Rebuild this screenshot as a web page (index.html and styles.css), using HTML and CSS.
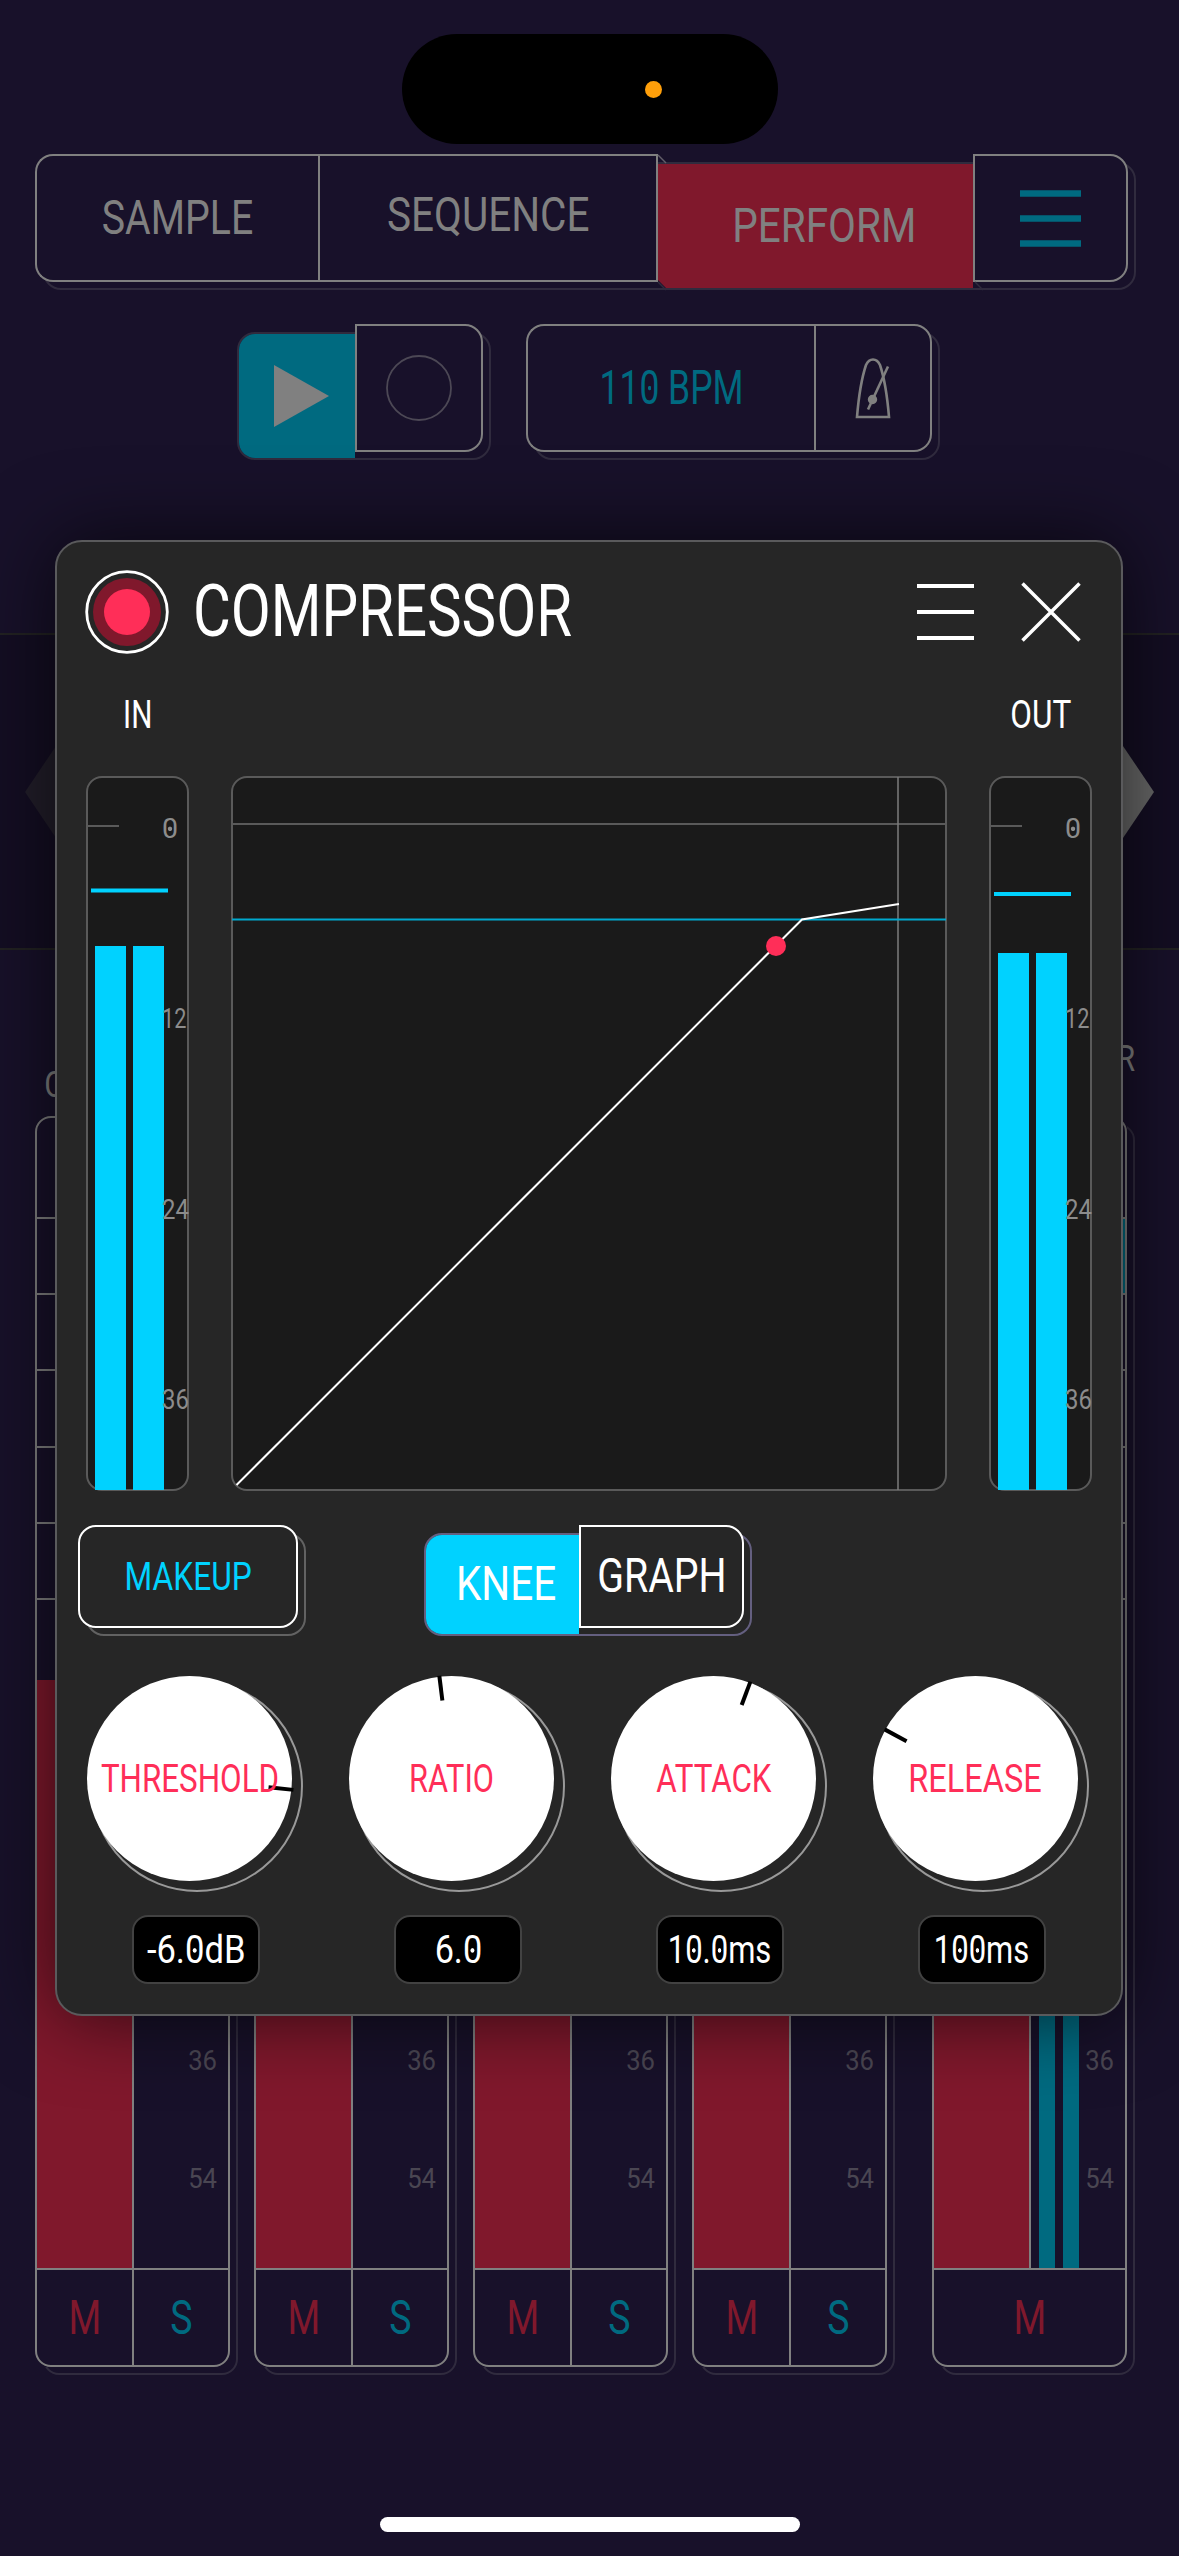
FILE: index.html
```html
<!DOCTYPE html>
<html lang="en">
<head>
<meta charset="utf-8">
<title>Compressor</title>
<link rel="stylesheet" href="styles.css">
</head>
<body>
<div class="screen">
  <main class="app">
    <nav class="group tabs">
      <div class="cell cell-first"><span class="label x81">SAMPLE</span></div>
      <div class="cell cell-mid"><span class="label x84 lift">SEQUENCE</span></div>
      <div class="cell-pressed pressed-red"><span class="label x84">PERFORM</span></div>
      <div class="cell cell-last">
        <svg class="menu-icon" viewBox="0 0 61 57"><path d="M0 3.500h61M0 28.500h61M0 53.500h61" stroke="#006a80" stroke-width="6.500"/></svg>
      </div>
      <svg class="bevel" viewBox="0 0 330 138"><path d="M1 1l8 8" stroke="#625e69" stroke-width="1.500"/><path d="M1 128l8 8M318 128l8 8" stroke="#302b3e" stroke-width="1.500"/></svg>
    </nav>

    <div class="transport">
      <div class="group player">
        <div class="cell-pressed pressed-teal"><svg class="play-icon" viewBox="0 0 55 62"><path d="M0 0L55 31L0 62z" fill="#808080"/></svg></div>
        <div class="cell cell-last"><svg class="rec-icon" viewBox="0 0 66 66"><circle cx="33" cy="33" r="32" fill="none" stroke="#4c4855" stroke-width="1.800"/></svg></div>
      </div>
      <div class="group tempo">
        <div class="cell cell-first"><span class="label bpm">11<span class="zero">0</span> BPM</span></div>
        <div class="cell cell-last">
          <svg class="metronome-icon" viewBox="0 0 36 62" fill="none" stroke="#808080" stroke-width="2.600"><path d="M2 60C3.500 42 6 23 11 8Q13.500 2.500 18 2.500Q22.500 2.500 25 8C30 23 32.500 42 34 60z"/><path d="M33 9.500L13 52.500"/><circle cx="17.500" cy="42.500" r="3.400" fill="#808080"/></svg>
        </div>
      </div>
    </div>

    <section class="band">
      <svg class="arrow" viewBox="0 0 60 178"><path d="M0 89L60 0V178z" fill="#221e2a"/></svg>
      <svg class="arrow" viewBox="0 0 60 178"><path d="M60 89L0 0V178z" fill="#686868"/></svg>
    </section>

    <section class="mixer">
      <div class="channel">
        <div class="name">C</div>
        <div class="strip">
          <div class="slot slot-head"></div><div class="slot"></div><div class="slot"></div><div class="slot"></div><div class="slot"></div><div class="slot"></div>
          <div class="fader"><div class="track"></div><div class="scale"><span>36</span><span>54</span></div></div>
          <div class="toggles"><b class="mute"><span>M</span></b><b class="solo"><span>S</span></b></div>
        </div>
      </div>
      <div class="channel">
        <div class="name"></div>
        <div class="strip">
          <div class="slot slot-head"></div><div class="slot"></div><div class="slot"></div><div class="slot"></div><div class="slot"></div><div class="slot"></div>
          <div class="fader"><div class="track"></div><div class="scale"><span>36</span><span>54</span></div></div>
          <div class="toggles"><b class="mute"><span>M</span></b><b class="solo"><span>S</span></b></div>
        </div>
      </div>
      <div class="channel">
        <div class="name"></div>
        <div class="strip">
          <div class="slot slot-head"></div><div class="slot"></div><div class="slot"></div><div class="slot"></div><div class="slot"></div><div class="slot"></div>
          <div class="fader"><div class="track"></div><div class="scale"><span>36</span><span>54</span></div></div>
          <div class="toggles"><b class="mute"><span>M</span></b><b class="solo"><span>S</span></b></div>
        </div>
      </div>
      <div class="channel">
        <div class="name"></div>
        <div class="strip">
          <div class="slot slot-head"></div><div class="slot"></div><div class="slot"></div><div class="slot"></div><div class="slot"></div><div class="slot"></div>
          <div class="fader"><div class="track"></div><div class="scale"><span>36</span><span>54</span></div></div>
          <div class="toggles"><b class="mute"><span>M</span></b><b class="solo"><span>S</span></b></div>
        </div>
      </div>
      <div class="channel master">
        <div class="name">R</div>
        <div class="strip">
          <div class="slot slot-head"></div><div class="slot slot-on"></div><div class="slot"></div><div class="slot"></div><div class="slot"></div><div class="slot"></div>
          <div class="fader"><div class="track"></div><div class="levels"><i></i><i></i></div><div class="scale"><span>36</span><span>54</span></div></div>
          <div class="toggles"><b class="mute"><span>M</span></b></div>
        </div>
      </div>
    </section>
  </main>

  <div class="island"><div class="island-dot"></div></div>
  <div class="home-bar"></div>

  <section class="modal">
    <header class="modal-head">
      <svg class="power" viewBox="0 0 84 84"><circle cx="42" cy="42" r="40.300" fill="none" stroke="#fff" stroke-width="2.800"/><circle cx="42" cy="42" r="34" fill="#80182c"/><circle cx="42" cy="42" r="23" fill="#ff2e58"/></svg>
      <h1 class="title">COMPRESSOR</h1>
      <svg class="options" viewBox="0 0 57 58"><path d="M0 3h57M0 29h57M0 55h57" stroke="#fff" stroke-width="4"/></svg>
      <svg class="close" viewBox="0 0 60 60"><path d="M1.500 1.500L58.500 58.500M58.500 1.500L1.500 58.500" stroke="#fff" stroke-width="3.500"/></svg>
    </header>

    <div class="columns captions"><span class="caption in">IN</span><span></span><span class="caption">OUT</span></div>

    <div class="columns displays">
      <div class="meter">
        <svg viewBox="0 0 103 715"><path d="M1 49h31" stroke="#5a5a5a" stroke-width="2"/><path d="M4 113.500h77" stroke="#00d2ff" stroke-width="4"/><path d="M8 169h31v544H8zM46 169h31v544H46z" fill="#00d2ff"/></svg>
        <div class="ticks"><span class="tick-zero"><span class="zero">0</span></span><span class="tick-12">12</span><span>24</span><span>36</span></div>
      </div>
      <svg class="graph" viewBox="0 0 716 715">
        <rect class="panel" x="1" y="1" width="714" height="713" rx="15"/>
        <path d="M1 48h714" stroke="#5a5a5a" stroke-width="2"/><path d="M667 1v713" stroke="#7d7d7d" stroke-width="1.500"/>
        <path d="M1 143.500h714" stroke="#00a9cf" stroke-width="2.200"/>
        <path d="M5.500 709L571 143.500L668 128" fill="none" stroke="#fff" stroke-width="2"/>
        <circle cx="545" cy="170" r="10" fill="#ff2e58"/>
      </svg>
      <div class="meter">
        <svg viewBox="0 0 103 715"><path d="M1 49h31" stroke="#5a5a5a" stroke-width="2"/><path d="M4 117h77" stroke="#00d2ff" stroke-width="4"/><path d="M8 176h31v537H8zM46 176h31v537H46z" fill="#00d2ff"/></svg>
        <div class="ticks"><span class="tick-zero"><span class="zero">0</span></span><span class="tick-12">12</span><span>24</span><span>36</span></div>
      </div>
    </div>

    <div class="buttons">
      <div class="group light makeup"><div class="cell"><span class="small x84">MAKEUP</span></div></div>
      <div class="group light violet view">
        <div class="cell-pressed pressed-cyan"><span class="label x84">KNEE</span></div>
        <div class="cell cell-last"><span class="label x81">GRAPH</span></div>
      </div>
    </div>

    <div class="knobs">
      <div class="knob"><div class="dial"><i class="needle n-threshold"></i><span class="small x82">THRESHOLD</span></div><div class="value"><span class="v-threshold">-6.<span class="zero">0</span>dB</span></div></div>
      <div class="knob"><div class="dial"><i class="needle n-ratio"></i><span class="small x81">RATIO</span></div><div class="value"><span class="v-ratio">6.<span class="zero">0</span></span></div></div>
      <div class="knob"><div class="dial"><i class="needle n-attack"></i><span class="small x82">ATTACK</span></div><div class="value"><span class="v-time">1<span class="zero">0</span>.<span class="zero">0</span>ms</span></div></div>
      <div class="knob"><div class="dial"><i class="needle n-release"></i><span class="small x85">RELEASE</span></div><div class="value"><span class="v-time">1<span class="zero">0</span><span class="zero">0</span>ms</span></div></div>
    </div>
  </section>
</div>
</body>
</html>
```
FILE: styles.css
```css
*, *::before { box-sizing: border-box; }
body { margin: 0; background: #18112a; font-family: Roboto, "Liberation Sans", sans-serif; }
svg { display: block; flex: none; }

.screen { position: relative; width: 1179px; height: 2556px; overflow: hidden; background: #18112a; color: #808080; }
.app { display: flex; flex-direction: column; padding-top: 154px; }

/* Raised button groups with an offset outline behind */
.group { position: relative; isolation: isolate; display: flex; height: 128px; --line: #808080; --edge: #302b3e; --face: #18112a; }
.group::before { content: ""; position: absolute; z-index: -1; left: 8px; top: 8px; width: 100%; height: 100%; border: 2px solid var(--edge); border-radius: 18px; }
.cell { display: flex; align-items: center; justify-content: center; border: 2px solid var(--line); background: var(--face); border-radius: 18px; }
.cell-first { border-radius: 18px 0 0 18px; border-right: 0; }
.cell-mid { border-radius: 0; }
.cell-last { border-radius: 0 18px 18px 0; }
.cell-pressed { display: flex; align-items: center; justify-content: center; margin-top: 10px; height: 124px; }

.label { display: inline-block; font-size: 48.5px; line-height: 1; white-space: nowrap; }
.small { display: inline-block; font-size: 38px; line-height: 1; white-space: nowrap; }
.x81 { transform: scaleX(.81); }
.x82 { transform: scaleX(.825); }
.x84 { transform: scaleX(.835); }
.x85 { transform: scaleX(.855); }
.lift { margin-bottom: 6px; }
.zero { background: radial-gradient(circle at 50% 51%, currentColor 1.8px, transparent 2.6px); }

.tabs { margin-left: 35px; width: 1093px; }
.tabs .cell-first { width: 283px; }
.tabs .cell-mid { width: 340px; }
.tabs .cell-pressed { width: 315px; padding-left: 18px; }
.tabs .cell-last { width: 155px; }
.pressed-red { background: #80182c; clip-path: polygon(0 0, 100% 0, 100% 100%, 8px 100%, 0 116px); }
.bevel { position: absolute; left: 622px; top: 0; width: 330px; height: 138px; }
.menu-icon { width: 61px; height: 57px; }

.transport { display: flex; margin: 42px 0 0 229px; gap: 43px; }
.player { width: 254px; }
.pressed-teal { margin-left: 10px; width: 116px; background: #006a80; border-radius: 16px 0 0 16px; padding-left: 8px; }
.player .cell-last { width: 128px; }
.play-icon { width: 55px; height: 62px; }
.rec-icon { width: 66px; height: 66px; }
.tempo { width: 406px; }
.tempo .cell-first { width: 288px; }
.tempo .cell-last { width: 118px; }
.bpm { color: #006a80; transform: scaleX(.73); }
.metronome-icon { width: 36px; height: 62px; }

.band { display: flex; justify-content: space-between; align-items: center; height: 317px; margin-top: 181px; padding: 0 25px; border: solid #222; border-width: 2px 0; background: rgba(0,0,0,.15); }
.arrow { width: 60px; height: 178px; }

.mixer { display: flex; padding-left: 35px; gap: 24px; }
.channel { width: 195px; }
.master { margin-left: 21px; }
.name { height: 166px; padding: 117px 0 0 11px; font-size: 36px; line-height: 1; transform: scaleX(.85); transform-origin: left; }
.master .name { padding: 91px 0 0; text-align: right; transform: translateX(8px) scaleX(.85); transform-origin: right; }
.strip { position: relative; display: flex; flex-direction: column; height: 1251px; border: 2px solid #808080; border-radius: 16px; }
.strip::before { content: ""; position: absolute; left: 6px; top: 6px; width: 195px; height: 1251px; border: 2px solid #302b3e; border-radius: 16px; clip-path: polygon(187px 0, 195px 0, 195px 1251px, 0 1251px, 0 1243px, 187px 1243px); }
.slot { height: 76.200px; border-bottom: 2px solid #808080; }
.slot-head { height: 101px; }
.slot-on { background: #006a80; }
.fader { flex: 1; display: flex; border-bottom: 2px solid #808080; }
.track { width: 97px; border-right: 2px solid #808080; background: linear-gradient(#18112a 80px, #80182c 80px); }
.levels { display: flex; gap: 8px; padding-left: 8px; }
.levels i { width: 16px; background: #006a80; }
.scale { flex: 1; display: flex; flex-direction: column; justify-content: flex-end; align-items: flex-end; padding: 0 11px 30px 0; font-size: 28.500px; color: #4a4652; }
.scale span { height: 118px; line-height: 118px; transform: scaleX(.9); transform-origin: right; }
.toggles { display: flex; height: 95px; }
.toggles b { flex: 1; display: flex; align-items: center; justify-content: center; font-weight: 400; font-size: 48px; line-height: 1; }
.toggles .solo { flex: 0 0 96px; border-left: 2px solid #808080; }
.toggles span { transform: scaleX(.78); }
.mute { color: #80182c; }
.solo { color: #006a80; }

.island { position: absolute; left: 402px; top: 34px; width: 376px; height: 110px; border-radius: 55px; background: #000; display: flex; align-items: center; padding-left: 243px; }
.island-dot { width: 17px; height: 17px; border-radius: 50%; background: #ff9f0a; }
.home-bar { position: absolute; left: 380px; top: 2517px; width: 420px; height: 15px; border-radius: 8px; background: #fff; }

/* Compressor dialog */
.modal { position: absolute; isolation: isolate; left: 55px; top: 540px; width: 1068px; height: 1476px; border: 2px solid #5a5a5c; border-radius: 27px; background: #262626; box-shadow: 0 0 80px rgba(0,0,0,.66); color: #fff; }
.modal-head { display: flex; align-items: center; height: 112px; padding: 28px 40px 0 28px; }
.power { width: 84px; height: 84px; }
.title { margin: 0 auto 0 24px; font-weight: 400; font-size: 71.5px; line-height: 1; transform: scaleX(.813); transform-origin: left; width: 480px; }
.options { width: 57px; height: 58px; }
.close { width: 60px; height: 60px; margin-left: 47px; }

.columns { display: grid; grid-template-columns: 103px 716px 103px; column-gap: 42px; padding-left: 29px; }
.captions { height: 122px; align-items: center; justify-items: center; }
.caption { font-size: 38px; line-height: 1; transform: scaleX(.83); }
.caption.in { transform: scaleX(.78); }
.meter { position: relative; height: 715px; border: 2px solid #5a5a5a; border-radius: 16px; background: #1a1a1a; }
.meter svg { width: 103px; height: 715px; margin: -1px; }
.graph { width: 716px; height: 715px; }
.panel { fill: #1a1a1a; stroke: #5a5a5a; stroke-width: 2; }
.ticks { position: absolute; left: 74px; top: -44px; font-size: 28.500px; color: #8c8c8c; }
.ticks > span { display: block; height: 190.300px; line-height: 190.300px; transform: scaleX(.84); transform-origin: left; }
.ticks .tick-12 { transform: scaleX(.76); }
.ticks .tick-zero { transform: scaleX(1); }

.buttons { display: flex; padding: 34px 0 0 21px; }
.light { --line: #fff; --edge: #626262; --face: #262626; height: 103px; }
.violet { --edge: #645f80; }
.makeup { width: 220px; color: #00d2ff; }
.makeup .cell { flex: 1; }
.view { width: 328px; margin-left: 118px; }
.pressed-cyan { margin-left: 10px; height: 99px; width: 153px; background: #00d2ff; border-radius: 16px 0 0 16px; padding-left: 8px; }
.view .cell-last { width: 165px; }

.knobs { display: flex; gap: 57px; padding: 48px 0 0 30px; }
.knob { width: 205px; }
.dial { position: relative; display: flex; align-items: center; justify-content: center; height: 205px; border-radius: 50%; background: #fff; color: #ff2e58; }
.dial::before { content: ""; position: absolute; z-index: -1; left: 4px; top: 4px; width: 212px; height: 212px; border: 2px solid #999; border-radius: 50%; }
.needle { position: absolute; left: 101px; top: -1px; width: 4px; height: 25px; background: #000; transform-origin: 2px 104px; }
.dial .small { position: relative; }
.n-threshold { transform: rotate(96deg); }
.n-ratio { transform: rotate(-7deg); }
.n-attack { transform: rotate(20.500deg); }
.n-release { transform: rotate(-61.500deg); }
.value { display: flex; align-items: center; justify-content: center; width: 128px; height: 69px; margin: 34px 0 0 45px; border: 2px solid #424242; border-radius: 16px; background: #000; font-size: 38px; line-height: 1; white-space: nowrap; }
.v-threshold { transform: scaleX(.91); }
.v-ratio { transform: scaleX(.9); }
.v-time { transform: scaleX(.815); }
```
